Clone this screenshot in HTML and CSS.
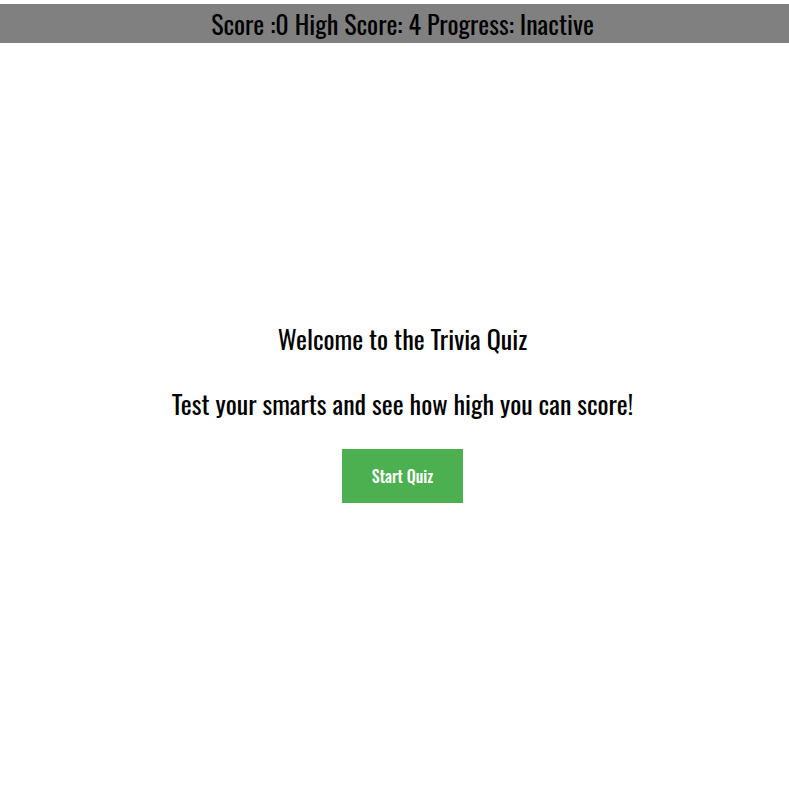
FILE: index.html
```html
<!DOCTYPE html>
<html lang="en">
<head>
<meta charset="utf-8">
<title>Trivia Quiz</title>
<link rel="stylesheet" href="styles.css">
</head>
<body>
<header class="status-bar">
  <span class="status-text">Score :0 High Score: 4 Progress: Inactive</span>
</header>
<main class="intro">
  <h1 class="intro-title">Welcome to the Trivia Quiz</h1>
  <p class="intro-sub">Test your smarts and see how high you can score!</p>
  <button class="start-btn" type="button">Start Quiz</button>
</main>
</body>
</html>
```
FILE: styles.css
```css
html, body {
  margin: 0;
  padding: 0;
  background: #ffffff;
}
body {
  font-family: "Oswald", "Liberation Sans Narrow", sans-serif;
  color: #000;
  padding-top: 4px;
}
.status-bar {
  background: #808080;
  height: 39px;
  display: flex;
  align-items: center;
  justify-content: center;
  padding-left: 16px;
}
.status-text {
  font-size: 26px;
  line-height: 39px;
}
.intro {
  display: flex;
  flex-direction: column;
  align-items: center;
  padding-top: 276px;
  padding-left: 16px;
}
.intro-title {
  font-size: 26px;
  font-weight: 400;
  margin: 0;
  line-height: 40px;
}
.intro-sub {
  font-size: 26px;
  margin: 25px 0 0;
  line-height: 40px;
}
.start-btn {
  margin-top: 25px;
  width: 121px;
  height: 54px;
  background: #4caf50;
  color: #fff;
  border: none;
  font-family: inherit;
  font-size: 16px;
  font-weight: 500;
  cursor: pointer;
}
```
